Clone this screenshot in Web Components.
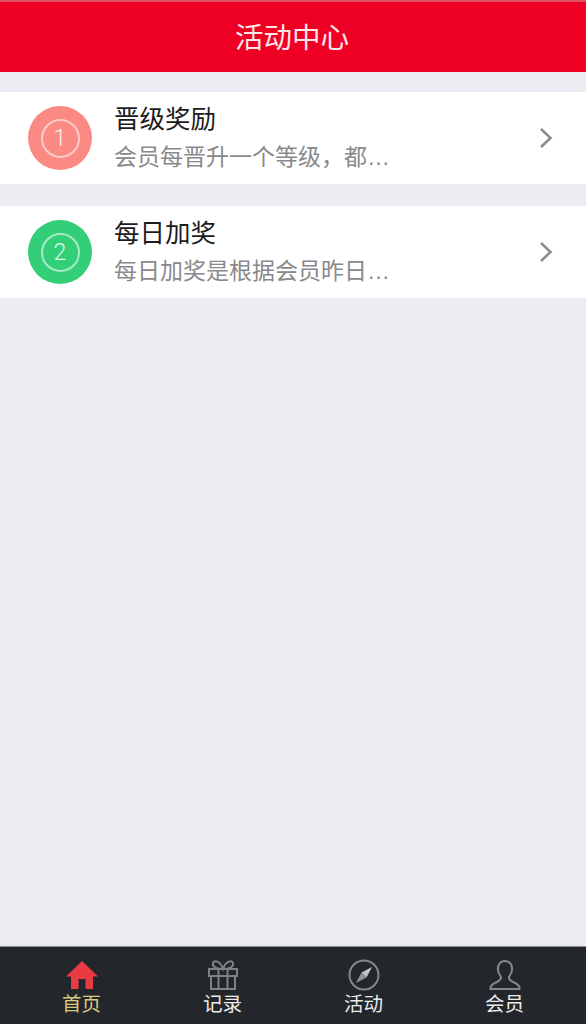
<!DOCTYPE html>
<html lang="zh-CN">
<head>
<meta charset="utf-8">
<title>活动中心</title>
<style>
  html, body {
    margin: 0;
    height: 100%;
  }

  body {
    font-family: "Liberation Sans", "Noto Sans CJK SC", sans-serif;
    background: #ebebf1;
  }
</style>
</head>
<body>
<activity-page>
  <app-header slot="header">活动中心</app-header>
  <activity-item color="#fb8a84" num="1" title="晋级奖励" desc="会员每晋升一个等级，都…"></activity-item>
  <activity-item color="#33cf78" num="2" title="每日加奖" desc="每日加奖是根据会员昨日…"></activity-item>
  <tab-bar slot="footer">
    <tab-item label="首页" active>
      <svg viewBox="0 0 32 30" width="32" height="30"><path fill="#ea3a42" d="M16 1 L32 16.500 H27 V29 H19.500 V19 H12.500 V29 H5 V16.500 H0 Z"/></svg>
    </tab-item>
    <tab-item label="记录">
      <svg viewBox="0 0 32 30" width="32" height="30" fill="none" stroke="#7f8185" stroke-width="2"><path d="M2 9 H30 V16 H2 Z M4 16 V29 H28 V16 M11.500 9 V29 M20.500 9 V29"/><path d="M16 9 C9 9 5 6.500 6 3 C7 0 13 0.500 16 9 C19 0.500 25 0 26 3 C27 6.500 23 9 16 9 Z"/></svg>
    </tab-item>
    <tab-item label="活动">
      <svg viewBox="0 0 32 32" width="32" height="32" fill="none"><circle cx="16" cy="16" r="14.500" stroke="#85878b" stroke-width="2"/><path fill="#c4c5c7" d="M24 8 L18.500 18.500 L13.500 13.500 Z"/><path fill="#8f9195" d="M8 24 L13.500 13.500 L18.500 18.500 Z"/></svg>
    </tab-item>
    <tab-item label="会员">
      <svg viewBox="0 0 32 30" width="32" height="30" fill="none" stroke="#85878b" stroke-width="2"><path d="M16 1 C11 1 8.500 5 9 10 C9.300 13.500 11 15.500 12 17 C12.500 19.500 11 20.500 8 22 C4 23.500 1 25.500 1.500 29 H30.500 C31 25.500 28 23.500 24 22 C21 20.500 19.500 19.500 20 17 C21 15.500 22.700 13.500 23 10 C23.500 5 21 1 16 1 Z"/></svg>
    </tab-item>
  </tab-bar>
</activity-page>

<script>
class ActivityPage extends HTMLElement {
  shadowRoot = this.attachShadow({ mode: "open" });

  constructor() {
    super();
    this.shadowRoot.innerHTML = `
      <style>
        :host {
          display: flex;
          flex-direction: column;
          height: 100vh;
          background: #ebebf1;
        }

        .list {
          flex-grow: 1;
          display: flex;
          flex-direction: column;
          gap: 22px;
          padding-top: 20px;
        }
      </style>
      <slot name="header"></slot>
      <div class="list"><slot></slot></div>
      <slot name="footer"></slot>
    `;
  }
}

class AppHeader extends HTMLElement {
  shadowRoot = this.attachShadow({ mode: "open" });

  constructor() {
    super();
    this.shadowRoot.innerHTML = `
      <style>
        :host {
          display: flex;
          align-items: center;
          justify-content: center;
          height: 66px;
          padding: 0 2px 4px 0;
          border-top: 2px solid #d9505e;
          background: #ee0024;
          color: #fde6e8;
          font-size: 28.5px;
        }
      </style>
      <slot></slot>
    `;
  }
}

class ActivityItem extends HTMLElement {
  shadowRoot = this.attachShadow({ mode: "open" });

  connectedCallback() {
    this.shadowRoot.innerHTML = `
      <style>
        :host {
          display: flex;
          align-items: center;
          height: 92px;
          padding: 0 33px 0 28px;
          background: #fff;
        }

        .badge {
          flex: none;
          display: flex;
          align-items: center;
          justify-content: center;
          width: 64px;
          height: 64px;
          border-radius: 50%;
          background: ${this.getAttribute("color")};
        }

        .badge__ring {
          display: flex;
          align-items: center;
          justify-content: center;
          box-sizing: border-box;
          width: 39px;
          height: 39px;
          border: 2px solid #ffffff90;
          border-radius: 50%;
          color: #ffffffe0;
          font-size: 23px;
          font-weight: 300;
          font-family: Roboto, sans-serif;
        }

        .text {
          flex-grow: 1;
          margin-left: 22px;
          padding-bottom: 1px;
          display: flex;
          flex-direction: column;
          gap: 3px;
        }

        .text__title {
          font-size: 25.5px;
          line-height: 36px;
          color: #1c1c1e;
        }

        .text__desc {
          font-size: 23px;
          line-height: 34px;
          color: #88898c;
          white-space: nowrap;
        }

        svg {
          flex: none;
        }
      </style>
      <div class="badge"><div class="badge__ring">${this.getAttribute("num")}</div></div>
      <div class="text">
        <div class="text__title">${this.getAttribute("title")}</div>
        <div class="text__desc">${this.getAttribute("desc")}</div>
      </div>
      <svg viewBox="0 0 14 22" width="14" height="22" fill="none" stroke="#8b8d90" stroke-width="2.600">
        <path d="M2 2 L11.500 11 L2 20"/>
      </svg>
    `;
  }
}

class TabBar extends HTMLElement {
  shadowRoot = this.attachShadow({ mode: "open" });

  constructor() {
    super();
    this.shadowRoot.innerHTML = `
      <style>
        :host {
          flex: none;
          display: grid;
          grid-template-columns: repeat(4, 141px);
          height: 77px;
          padding: 0 11px;
          border-top: 1px solid #8d9093;
          background: #23272b;
        }
      </style>
      <slot></slot>
    `;
  }
}

class TabItem extends HTMLElement {
  shadowRoot = this.attachShadow({ mode: "open" });

  connectedCallback() {
    const color = this.hasAttribute("active") ? "#dccb7e" : "#ececec";
    this.shadowRoot.innerHTML = `
      <style>
        :host {
          display: flex;
          flex-direction: column;
          align-items: center;
          padding-top: 12px;
        }

        .icon {
          height: 31px;
          display: flex;
          align-items: center;
        }

        .label {
          margin-top: 1px;
          font-size: 19.5px;
          line-height: 26px;
          color: ${color};
        }
      </style>
      <div class="icon"><slot></slot></div>
      <div class="label">${this.getAttribute("label")}</div>
    `;
  }
}

customElements.define("activity-page", ActivityPage);
customElements.define("app-header", AppHeader);
customElements.define("activity-item", ActivityItem);
customElements.define("tab-bar", TabBar);
customElements.define("tab-item", TabItem);
</script>
</body>
</html>
